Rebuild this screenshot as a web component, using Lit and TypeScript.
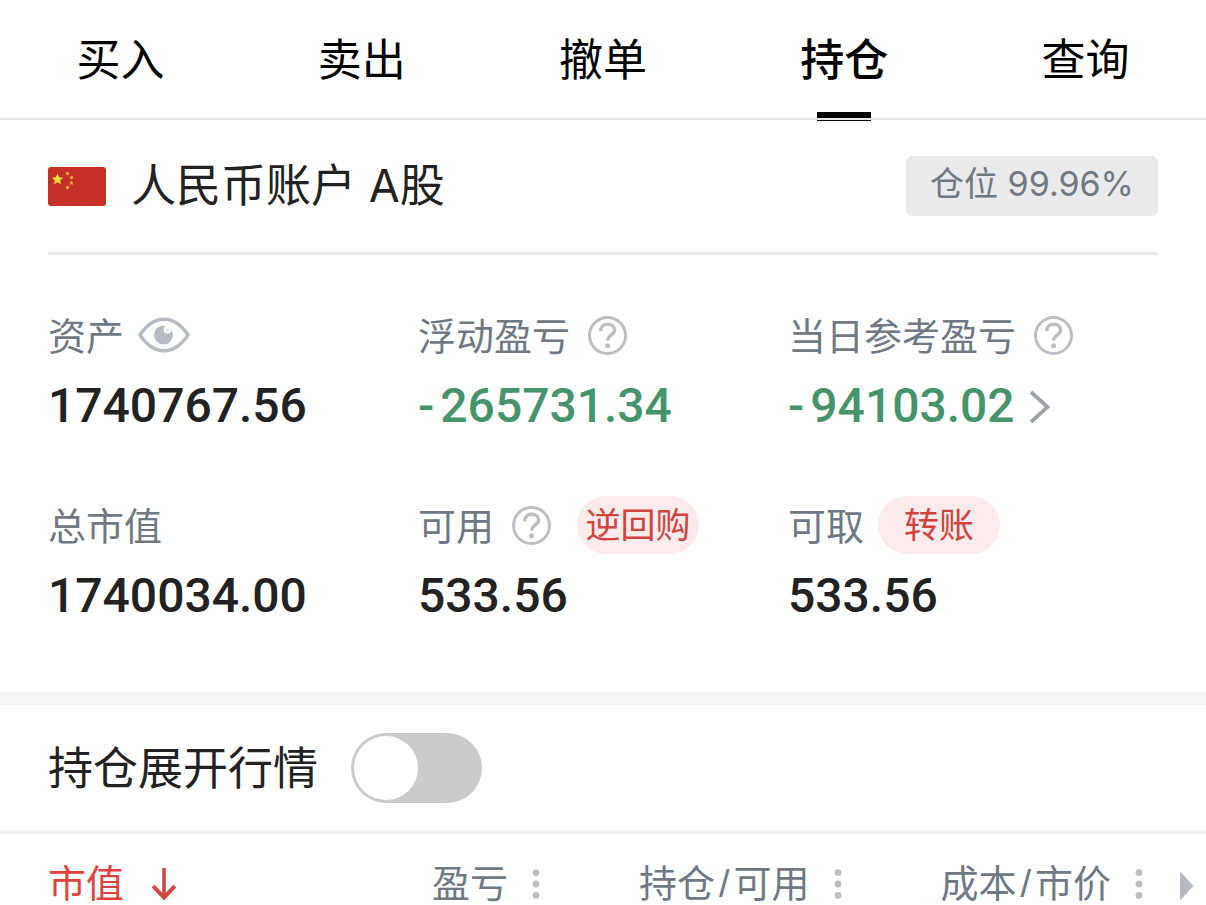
import { LitElement, html, css, svg, nothing } from "lit";
import { customElement, property, state } from "lit/decorators.js";
import { classMap } from "lit/directives/class-map.js";

const baseStyles = css`
  * {
    box-sizing: border-box;
  }
  button {
    margin: 0;
    padding: 0;
    border: 0;
    background: none;
    color: inherit;
    font: inherit;
    cursor: pointer;
  }
  svg {
    display: block;
    flex: none;
  }
`;

const starPath = (cx: number, cy: number, r: number, turn = 0) => {
  const points: string[] = [];
  for (let i = 0; i < 10; i++) {
    const radius = i % 2 ? r * 0.45 : r;
    const angle = -Math.PI / 2 + (i * Math.PI) / 5 + turn;
    points.push(`${(cx + radius * Math.cos(angle)).toFixed(2)},${(cy + radius * Math.sin(angle)).toFixed(2)}`);
  }
  return points.join(" ");
};

const flagIcon = html`
  <svg width="58" height="39" viewBox="0 0 58 39" role="img" aria-label="中国">
    <rect width="58" height="39" rx="3" fill="#c62f28" />
    ${svg`
      <polygon points=${starPath(9.5, 12.5, 6)} fill="#f8e13c" />
      <polygon points=${starPath(19.5, 6.5, 2.4, 0.4)} fill="#f0c23a" />
      <polygon points=${starPath(23.5, 10.5, 2.4, 0.8)} fill="#f0c23a" />
      <polygon points=${starPath(23.5, 16, 2.4)} fill="#f0c23a" />
      <polygon points=${starPath(19.5, 20.5, 2.4, 0.4)} fill="#f0c23a" />
    `}
  </svg>
`;

const eyeIcon = html`
  <svg width="52" height="36" viewBox="0 0 52 36" aria-hidden="true">
    <path d="M2 18C9 7.500 17 2.300 26 2.300S43 7.500 50 18C43 28.500 35 33.700 26 33.700S9 28.500 2 18Z"
      fill="none" stroke="#b7bcc2" stroke-width="3.400" stroke-linejoin="round" />
    <circle cx="25.500" cy="18" r="9.500" fill="#b7bcc2" />
    <circle cx="29.500" cy="12.800" r="3.800" fill="#fff" />
    <circle cx="29.500" cy="13.500" r="1.600" fill="#e4e6e9" />
  </svg>
`;

const helpIcon = html`
  <svg width="39" height="39" viewBox="0 0 39 39" aria-hidden="true">
    <circle cx="19.500" cy="19.500" r="18" fill="none" stroke="#bcc0c5" stroke-width="3" />
    <path d="M12.700 15.200C12.700 10.800 15.600 8.200 19.600 8.200C23.600 8.200 26.600 10.700 26.600 14.200C26.600 19 19.600 19 19.600 24.800"
      fill="none" stroke="#bcc0c5" stroke-width="3.400" />
    <circle cx="19.600" cy="29.800" r="2.500" fill="#bcc0c5" />
  </svg>
`;

const chevronIcon = html`
  <svg width="22" height="34" viewBox="0 0 22 34" aria-hidden="true">
    <path d="M2 3L18.500 18L2 33" fill="none" stroke="#9fa4aa" stroke-width="3.800" />
  </svg>
`;

const arrowDownIcon = html`
  <svg width="24" height="32" viewBox="0 0 24 32" aria-hidden="true">
    <path d="M12 0V29" fill="none" stroke="#d4453f" stroke-width="3.600" />
    <path d="M1.200 18L12 29.500L22.800 18" fill="none" stroke="#d4453f" stroke-width="4" />
  </svg>
`;

const dotsIcon = html`
  <svg width="8" height="30" viewBox="0 0 8 30" aria-hidden="true">
    <g fill="#bcbfc3">
      <circle cx="4" cy="3.600" r="3.400" />
      <circle cx="4" cy="15" r="3.400" />
      <circle cx="4" cy="26.400" r="3.400" />
    </g>
  </svg>
`;

@customElement("trade-tabs")
class TradeTabs extends LitElement {
  static styles = [
    baseStyles,
    css`
      :host {
        display: block;
      }
      .tabs {
        display: grid;
        grid-template-columns: repeat(5, 1fr);
        height: 120px;
        border-bottom: 2px solid #e8e8e8;
      }
      .tab {
        position: relative;
        font-size: 44px;
        line-height: 116px;
        color: #000;
      }
      .active {
        font-weight: 500;
      }
      .active::after {
        content: "";
        position: absolute;
        left: 50%;
        bottom: -3px;
        width: 54px;
        height: 9px;
        margin-left: -27px;
        background: linear-gradient(#000 6px, #e8e8e8 6px 8px, #000 8px);
      }
    `,
  ];
  @state() private active = "持仓";

  render() {
    return html`
      <nav class="tabs" role="tablist">
        ${["买入", "卖出", "撤单", "持仓", "查询"].map(
          (name) => html`
            <button
              role="tab"
              class=${classMap({ tab: true, active: name === this.active })}
              aria-selected=${name === this.active ? "true" : "false"}
              @click=${() => (this.active = name)}
            >${name}</button>
          `
        )}
      </nav>
    `;
  }
}

@customElement("account-metric")
class AccountMetric extends LitElement {
  static styles = [
    baseStyles,
    css`
      :host {
        display: block;
        min-width: 0;
      }
      .label {
        display: flex;
        align-items: center;
        gap: 14px;
        height: 58px;
        font-size: 38px;
        line-height: 56px;
        color: #6f7983;
        white-space: nowrap;
      }
      .help {
        margin: 0 12px 0 4px;
      }
      .pill {
        width: 122px;
        height: 58px;
        border-radius: 29px;
        background: #fbebec;
        color: #d0433e;
        font-size: 35px;
        line-height: 56px;
      }
      .value {
        display: flex;
        align-items: center;
        gap: 14px;
        margin-top: 14px;
        font-family: Roboto, "Noto Sans CJK SC", sans-serif;
        font-size: 48px;
        font-weight: 500;
        line-height: 56px;
        color: #222;
      }
      .loss {
        color: #46946b;
      }
      .sign {
        padding-right: 6px;
      }
    `,
  ];
  @property() label = "";
  @property() value = "";
  @property() action = "";
  @property({ type: Boolean }) help = false;
  @property({ type: Boolean }) eye = false;
  @property({ type: Boolean }) more = false;

  render() {
    const loss = this.value.startsWith("-");
    return html`
      <div class="label">
        <span>${this.label}</span>
        ${this.eye ? html`<button aria-label="隐藏金额">${eyeIcon}</button>` : nothing}
        ${this.help ? html`<button class="help" aria-label="说明">${helpIcon}</button>` : nothing}
        ${this.action ? html`<button class="pill">${this.action}</button>` : nothing}
      </div>
      <div class=${classMap({ value: true, loss })}>
        <span>${loss ? html`<span class="sign">-</span>${this.value.slice(1)}` : this.value}</span>
        ${this.more ? html`<button aria-label="查看详情">${chevronIcon}</button>` : nothing}
      </div>
    `;
  }
}

@customElement("position-table")
class PositionTable extends LitElement {
  static styles = [
    baseStyles,
    css`
      :host {
        display: block;
        position: relative;
      }
      .table {
        width: 100%;
        table-layout: fixed;
        border-collapse: collapse;
      }
      .cell {
        padding: 30px 63px 0 0;
        font-family: "Liberation Sans", "Noto Sans CJK SC", sans-serif;
        font-size: 38px;
        font-weight: 400;
        line-height: 40px;
        color: #6f7983;
        text-align: right;
        white-space: nowrap;
      }
      .cell:first-child {
        padding: 30px 0 0 48px;
        text-align: left;
        color: #e2403b;
      }
      .sort {
        display: inline-flex;
        align-items: center;
        gap: 24px;
        height: 40px;
        vertical-align: top;
      }
      .cell:first-child .sort {
        gap: 28px;
      }
      .slash {
        padding: 0 4px;
      }
      .next {
        position: absolute;
        right: 12px;
        top: 37px;
      }
    `,
  ];

  private heading(name: string) {
    const [first, second] = name.split("/");
    return second ? html`<span>${first}<span class="slash">/</span>${second}</span>` : html`<span>${first}</span>`;
  }

  render() {
    return html`
      <table class="table">
        <thead>
          <tr>
            <th class="cell" scope="col" aria-sort="descending">
              <button class="sort">市值${arrowDownIcon}</button>
            </th>
            ${["盈亏", "持仓/可用", "成本/市价"].map(
              (name) => html`
                <th class="cell" scope="col"><button class="sort">${this.heading(name)}${dotsIcon}</button></th>
              `
            )}
          </tr>
        </thead>
      </table>
      <button class="next" aria-label="更多列">
        <svg width="14" height="30" viewBox="0 0 14 30" aria-hidden="true">
          <path d="M0 0.500L13.500 15L0 29.500Z" fill="#b4bac0" />
        </svg>
      </button>
    `;
  }
}

@customElement("app-root")
class AppRoot extends LitElement {
  static styles = [
    baseStyles,
    css`
      :host {
        display: block;
        background: #fff;
        color: #222;
        font-family: "Noto Sans", "Noto Sans CJK SC", sans-serif;
      }
      .account {
        padding: 0 48px 68px;
        border-bottom: 13px solid #f4f4f4;
      }
      .head {
        display: flex;
        align-items: center;
        gap: 25px;
        height: 135px;
        border-bottom: 3px solid #ebebeb;
      }
      .title {
        flex: 1;
        margin: 0;
        font-family: Inter, "Noto Sans CJK SC", sans-serif;
        font-size: 45px;
        font-weight: 400;
        line-height: 60px;
      }
      .ratio {
        padding: 0 24px;
        border-radius: 6px;
        background: #eaeaeb;
        font-family: Inter, "Noto Sans CJK SC", sans-serif;
        font-size: 34px;
        line-height: 56px;
        padding-bottom: 4px;
        color: #6f7983;
      }
      .metrics {
        display: grid;
        grid-template-columns: repeat(3, 1fr);
        row-gap: 62px;
        padding-top: 51px;
      }
      .expand {
        display: flex;
        align-items: center;
        gap: 33px;
        height: 129px;
        padding: 0 48px;
        border-bottom: 3px solid #f2f2f2;
        font-size: 45px;
        line-height: 60px;
      }
      .switch {
        appearance: none;
        display: flex;
        width: 131px;
        height: 70px;
        margin: 0;
        padding: 3px;
        border-radius: 35px;
        background: #cbcbcb;
        cursor: pointer;
      }
      .switch::before {
        content: "";
        width: 64px;
        height: 64px;
        border-radius: 50%;
        background: #fff;
      }
      .switch:checked {
        justify-content: flex-end;
        background: #e2403b;
      }
    `,
  ];

  render() {
    return html`
      <trade-tabs></trade-tabs>
      <section class="account">
        <header class="head">
          ${flagIcon}
          <h1 class="title">人民币账户 A股</h1>
          <span class="ratio">仓位 99.96%</span>
        </header>
        <div class="metrics">
          <account-metric label="资产" value="1740767.56" eye></account-metric>
          <account-metric label="浮动盈亏" value="-265731.34" help></account-metric>
          <account-metric label="当日参考盈亏" value="-94103.02" help more></account-metric>
          <account-metric label="总市值" value="1740034.00"></account-metric>
          <account-metric label="可用" value="533.56" action="逆回购" help></account-metric>
          <account-metric label="可取" value="533.56" action="转账"></account-metric>
        </div>
      </section>
      <div class="expand">
        <label for="expand">持仓展开行情</label>
        <input class="switch" id="expand" type="checkbox" role="switch" />
      </div>
      <position-table></position-table>
    `;
  }
}
